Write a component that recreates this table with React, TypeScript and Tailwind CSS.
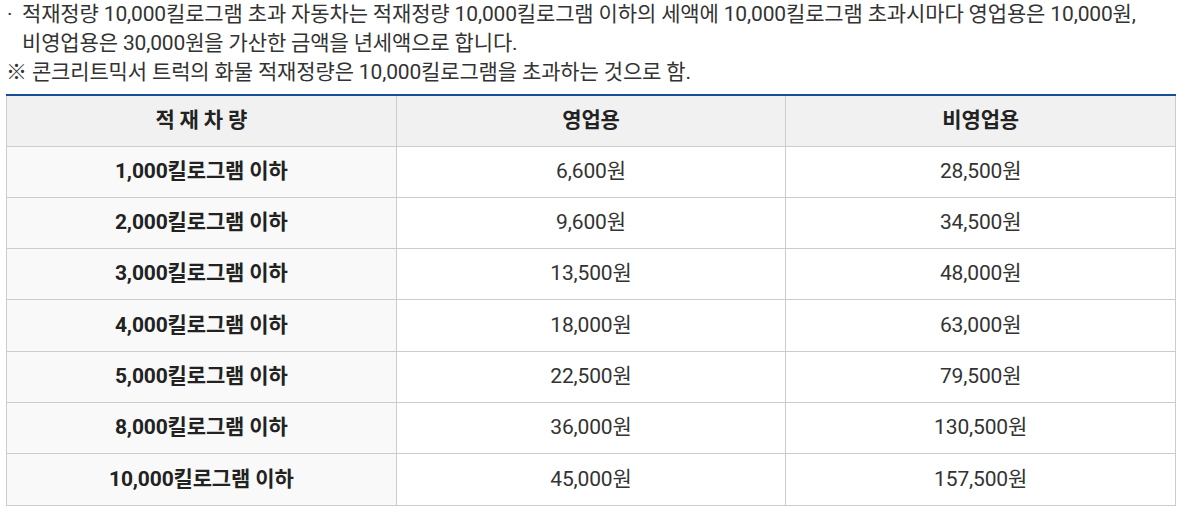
const ROWS = [
  ["1,000킬로그램 이하", "6,600원", "28,500원"],
  ["2,000킬로그램 이하", "9,600원", "34,500원"],
  ["3,000킬로그램 이하", "13,500원", "48,000원"],
  ["4,000킬로그램 이하", "18,000원", "63,000원"],
  ["5,000킬로그램 이하", "22,500원", "79,500원"],
  ["8,000킬로그램 이하", "36,000원", "130,500원"],
  ["10,000킬로그램 이하", "45,000원", "157,500원"],
]

export default function App() {
  return (
    <div
      className="w-[1182px] h-[508px] bg-white text-[#333] px-[6px] overflow-hidden tracking-[-0.15px]"
      style={{ fontFamily: 'Roboto, "Noto Sans CJK KR", sans-serif' }}
    >
      <div className="text-[21px] leading-[29px]">
        <div className="flex">
          <span className="w-[16px] shrink-0 pl-[1px]">·</span>
          <span>
            적재정량 10,000킬로그램 초과 자동차는 적재정량 10,000킬로그램 이하의 세액에 10,000킬로그램 초과시마다 영업용은 10,000원,
            <br />
            비영업용은 30,000원을 가산한 금액을 년세액으로 합니다.
          </span>
        </div>
        <div>※ 콘크리트믹서 트럭의 화물 적재정량은 10,000킬로그램을 초과하는 것으로 함.</div>
      </div>

      <table className="mt-[7px] w-full border-collapse table-fixed border-t-2 border-t-[#1b4e98] text-[21px]">
        <thead>
          <tr className="h-[51px] bg-[#f1f1f1]">
            <th className="border border-[#ccc] border-t-0 font-bold text-[#222]">적 재 차 량</th>
            <th className="border border-[#ccc] border-t-0 font-bold text-[#222]">영업용</th>
            <th className="border border-[#ccc] border-t-0 font-bold text-[#222]">비영업용</th>
          </tr>
        </thead>
        <tbody>
          {ROWS.map((r) => (
            <tr key={r[0]} className="h-[51.3px]">
              <td className="border border-[#ccc] bg-[#f9f9f9] text-center font-bold text-[#222]">{r[0]}</td>
              <td className="border border-[#ccc] text-center">{r[1]}</td>
              <td className="border border-[#ccc] text-center">{r[2]}</td>
            </tr>
          ))}
        </tbody>
      </table>
    </div>
  )
}
